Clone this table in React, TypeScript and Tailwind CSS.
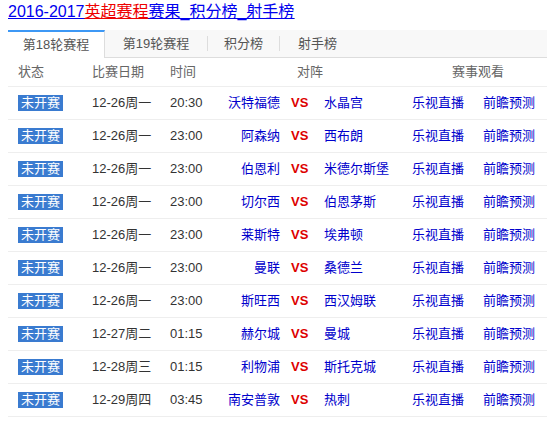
import React from 'react';

const matches = [
  { date: '12-26周一', time: '20:30', home: '沃特福德', away: '水晶宫' },
  { date: '12-26周一', time: '23:00', home: '阿森纳', away: '西布朗' },
  { date: '12-26周一', time: '23:00', home: '伯恩利', away: '米德尔斯堡' },
  { date: '12-26周一', time: '23:00', home: '切尔西', away: '伯恩茅斯' },
  { date: '12-26周一', time: '23:00', home: '莱斯特', away: '埃弗顿' },
  { date: '12-26周一', time: '23:00', home: '曼联', away: '桑德兰' },
  { date: '12-26周一', time: '23:00', home: '斯旺西', away: '西汉姆联' },
  { date: '12-27周二', time: '01:15', home: '赫尔城', away: '曼城' },
  { date: '12-28周三', time: '01:15', home: '利物浦', away: '斯托克城' },
  { date: '12-29周四', time: '03:45', home: '南安普敦', away: '热刺' },
];

export default function App() {
  return (
    <div className="w-[547px] h-[422px] overflow-hidden bg-white pl-[8px] font-['Liberation_Sans','Noto_Sans_CJK_SC',sans-serif]">
      <div className="pt-[2px] text-[16px] leading-[20px] underline">
        <a className="text-[#0000ee]">2016-2017</a>
        <a className="text-[#ee0000]">英超赛程</a>
        <a className="text-[#0000ee]">赛果_积分榜_射手榜</a>
      </div>

      <div className="mt-[8px] flex h-[28px] bg-[#f8f8f8] text-[13px] text-[#555]">
        <div className="w-[97px] flex items-center justify-center bg-white border-t-2 border-[#3d98f5] border-r border-r-[#dddddd]">
          第18轮赛程
        </div>
        <div className="flex-1 flex items-center border-b border-[#dddddd]">
          <div className="w-[102px] text-center">第19轮赛程</div>
          <div className="w-px h-[15px] bg-[#dddddd]" />
          <div className="w-[71px] text-center">积分榜</div>
          <div className="w-px h-[15px] bg-[#dddddd]" />
          <div className="w-[75px] text-center">射手榜</div>
        </div>
      </div>

      <div className="flex h-[29px] items-center border-b border-[#eeeeee] text-[13px] text-[#666]">
        <div className="w-[84px] pl-[10px]">状态</div>
        <div className="w-[78px]">比赛日期</div>
        <div className="w-[127px]">时间</div>
        <div className="w-[155px]">对阵</div>
        <div>赛事观看</div>
      </div>

      {matches.map((m, i) => (
        <div key={i} className="flex h-[33px] items-center border-b border-[#eeeeee] text-[13px] text-[#333]">
          <div className="w-[84px] pl-[10px]">
            <span className="inline-block h-[16px] leading-[16px] px-[3px] bg-[#3a7bd0] text-white">未开赛</span>
          </div>
          <div className="w-[78px]">{m.date}</div>
          <div className="w-[50px]">{m.time}</div>
          <div className="w-[60px] text-right text-[#0000cc]">{m.home}</div>
          <div className="w-[44px] pl-[11px] font-bold text-[#dd0000]">VS</div>
          <div className="w-[88px] text-[#0000cc]">{m.away}</div>
          <div className="w-[71px] text-[#0000cc]">乐视直播</div>
          <div className="text-[#0000cc]">前瞻预测</div>
        </div>
      ))}
    </div>
  );
}
